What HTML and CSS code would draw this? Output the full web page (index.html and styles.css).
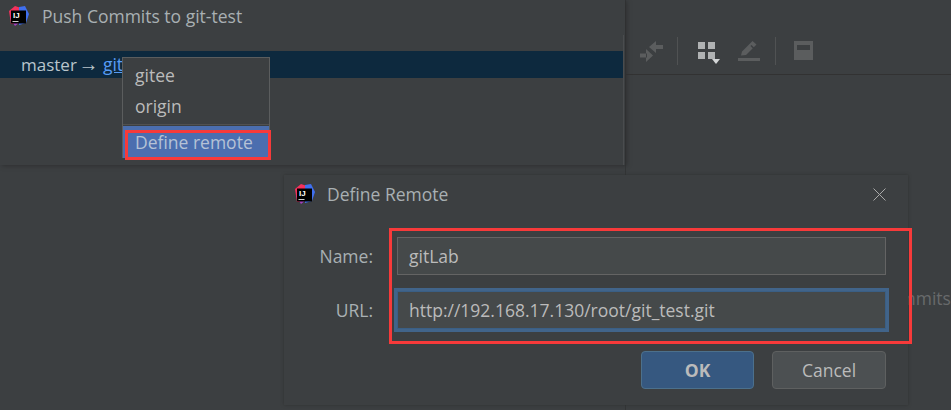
FILE: index.html
```html
<!DOCTYPE html>
<html lang="en">
<head>
  <meta charset="UTF-8">
  <title>Define Remote</title>
  <link rel="stylesheet" href="styles.css">
</head>
<body>

<!-- window behind, right side -->
<section class="log-window">
  <div class="log-toolbar">
    <svg class="tool" width="24" height="24" viewBox="0 0 24 24"><path d="M14 6h9v4h-9zM9 8l7-6v12z" fill="#5b5d5e"/><path d="M0 14.500h7v4H0zM13 16.500l-7-6.500v13z" fill="#5b5d5e"/></svg>
    <span class="tool-sep sep-first"></span>
    <span class="group-icon"><i></i><i></i><i></i><i></i><b></b></span>
    <svg class="tool" width="24" height="24" viewBox="0 0 24 24"><path d="M1 19h22v3H1zM4 16.500l1-4L15.500 2l4 3.500L9 16z" fill="#5b5d5e"/><path d="M14 6.500l3 3" stroke="#3c3f41" stroke-width="1.500"/></svg>
    <span class="tool-sep sep-second"></span>
    <span class="preview-icon"></span>
  </div>
  <p class="log-empty">Commits</p>
</section>

<!-- push dialog -->
<section class="push-window">
  <header class="title-bar">
    <svg class="app-icon" width="20" height="20" viewBox="0 0 20 20"><path d="M0 5l6-5 6 2-4 15-6 1z" fill="#f5315c"/><path d="M1 12l5 8 5-4z" fill="#a63fbf"/><path d="M10 1l6-1 4 8-3 9-7 2z" fill="#3f6fee"/><rect x="2" y="4.500" width="15" height="13" fill="#000"/><rect x="3.500" y="15" width="6" height="1" fill="#ccc"/><text x="4" y="12" class="app-icon-text">IJ</text></svg>
    <h1>Push Commits to git-test</h1>
  </header>
  <div class="branch-row">
    <span class="branch-name">master</span> <span class="arrow">→</span> <a class="remote-link">git</a>
  </div>
</section>

<div class="remote-menu">
  <div class="menu-item">gitee</div>
  <div class="menu-item">origin</div>
  <div class="menu-sep"></div>
  <div class="menu-item selected">Define remote</div>
</div>
<div class="mark mark-menu"></div>

<!-- define remote dialog -->
<section class="define-dialog">
  <header class="title-bar dialog-title">
    <svg class="app-icon" width="20" height="20" viewBox="0 0 20 20"><path d="M0 5l6-5 6 2-4 15-6 1z" fill="#f5315c"/><path d="M1 12l5 8 5-4z" fill="#a63fbf"/><path d="M10 1l6-1 4 8-3 9-7 2z" fill="#3f6fee"/><rect x="2" y="4.500" width="15" height="13" fill="#000"/><rect x="3.500" y="15" width="6" height="1" fill="#ccc"/><text x="4" y="12" class="app-icon-text">IJ</text></svg>
    <h2>Define Remote</h2>
    <svg class="close-icon" width="13" height="13" viewBox="0 0 13 13"><path d="M.5.500l12 12M12.500.500l-12 12" stroke="#a9a9a9" stroke-width="1" fill="none"/></svg>
  </header>
  <div class="form">
    <label class="form-label">Name:</label>
    <div class="field">gitLab</div>
    <label class="form-label">URL:</label>
    <div class="field focused">http://192.168.17.130/root/git_test.git</div>
  </div>
  <div class="buttons">
    <button class="btn btn-ok">OK</button>
    <button class="btn">Cancel</button>
  </div>
  <div class="mark mark-form"></div>
</section>

</body>
</html>
```

FILE: styles.css
```css
/* General Styles */
html, body {
  height: 100%;
}
body {
  position: relative;
  margin: 0;
  overflow: hidden;
  background-color: #3c3f41;
  color: #bbbbbb;
  font-family: "Open Sans", "Noto Sans", sans-serif;
  font-size: 17.5px;
}
h1, h2 {
  margin: 0;
  font-size: 17.5px;
  font-weight: 400;
  color: #a9b0b3;
}

/* Windows */
.push-window {
  position: absolute;
  left: 0;
  top: 0;
  width: 625px;
  height: 165px;
  background-color: #3c3f41;
  box-shadow: 2px 1px 4px #2f3031;
}
.push-window::after {
  content: "";
  position: absolute;
  right: 1px;
  top: 35px;
  bottom: 0;
  width: 1px;
  background-color: #4a4c4e;
}
.log-window {
  position: absolute;
  left: 625px;
  top: 0;
  right: 0;
  bottom: 0;
  background-color: #3c3f41;
  border-left: 1px solid #333536;
}
.log-toolbar {
  display: flex;
  align-items: center;
  height: 75px;
  padding: 27px 0 0 14px;
  box-sizing: border-box;
  border-bottom: 1px solid #323232;
}
.tool {
  flex: none;
}
.tool-sep {
  width: 1px;
  height: 28px;
  background-color: #505253;
}
.sep-first {
  margin: 0 20px 0 13px;
}
.sep-second {
  margin: 0 18px 0 14px;
}
.group-icon {
  display: grid;
  position: relative;
  grid-template-columns: 7px 7px;
  gap: 3px;
  margin-right: 22px;
}
.group-icon i {
  width: 7px;
  height: 7px;
  background-color: #b0b2b3;
}
.group-icon b {
  position: absolute;
  right: -5px;
  bottom: -5px;
  border-left: 4px solid transparent;
  border-right: 4px solid transparent;
  border-top: 5px solid #d4d6d7;
}
.preview-icon {
  width: 19px;
  height: 19px;
  box-sizing: border-box;
  background-color: #5b5d5e;
  border-top: 4px solid #5b5d5e;
}
.preview-icon::before {
  content: "";
  display: block;
  height: 5px;
  margin: 0 3px;
  background-color: #3c3f41;
}
.log-empty {
  position: absolute;
  left: 252px;
  top: 286px;
  margin: 0;
  line-height: 24px;
  color: #686a6b;
}

/* Title bars */
.title-bar {
  display: flex;
  align-items: center;
  height: 32px;
  padding-left: 9px;
  gap: 13px;
}
.app-icon {
  flex: none;
}
.app-icon-text {
  font-family: "Liberation Sans", sans-serif;
  font-size: 8px;
  font-weight: 700;
  fill: #fff;
}

/* Push window content */
.branch-row {
  margin-top: 19px;
  height: 27px;
  margin-right: 2px;
  padding-left: 21px;
  background-color: #0d293e;
  color: #b9c5cc;
  line-height: 27px;
}
.branch-name {
  font-size: 17px;
}
.arrow {
  margin: 0 0 0 -3px;
  font-family: "Liberation Sans", sans-serif;
  font-size: 20px;
  line-height: 1;
}
.remote-link {
  color: #589df6;
  text-decoration: underline;
}

/* Popup */
.remote-menu {
  position: absolute;
  left: 122px;
  top: 57px;
  width: 148px;
  height: 101px;
  padding-top: 2px;
  box-sizing: border-box;
  background-color: #3c3f41;
  border: 1px solid #5b5d5e;
}
.menu-item {
  height: 31px;
  padding-left: 12px;
  line-height: 30px;
  color: #bbbbbb;
}
.menu-sep {
  height: 1px;
  margin: 2px 0 1px;
  background-color: #515151;
}
.selected {
  height: 32px;
  line-height: 32px;
  background-color: #4b6eaf;
  color: #b5c2d6;
}

/* Red marks drawn over the screenshot */
.mark {
  position: absolute;
  box-sizing: border-box;
  border: 3px solid #f73a3a;
}
.mark-menu {
  left: 125px;
  top: 130px;
  width: 146px;
  height: 30px;
}
.mark-form {
  left: 105px;
  top: 53px;
  width: 523px;
  height: 116px;
}

/* Define remote dialog */
.define-dialog {
  position: absolute;
  left: 284px;
  top: 175px;
  width: 624px;
  height: 230px;
  background-color: #3c3f41;
  box-shadow: 0 0 3px #2f3031;
}
.dialog-title {
  height: 38px;
  padding-left: 11px;
  gap: 12px;
}
.close-icon {
  margin-left: auto;
  margin-right: 22px;
}
.form {
  display: grid;
  grid-template-columns: 89px 489px;
  grid-template-rows: 38px 38px;
  row-gap: 16px;
  column-gap: 24px;
  margin-top: 24px;
}
.form-label {
  justify-self: end;
  align-self: center;
  color: #a9b0b3;
}
.field {
  padding-left: 11px;
  box-sizing: border-box;
  background-color: #45494a;
  border: 1px solid #646464;
  line-height: 36px;
  color: #bbbbbb;
}
.focused {
  border-color: #3a5f85;
  box-shadow: 0 0 0 3px #41648a;
}
.buttons {
  display: flex;
  justify-content: flex-end;
  gap: 18px;
  margin-top: 22px;
  padding-right: 22px;
}
.btn {
  width: 114px;
  height: 38px;
  padding: 0;
  font: inherit;
  color: #bbbbbb;
  background-color: #4c5052;
  border: 1px solid #5e6060;
  border-radius: 4px;
}
.btn-ok {
  width: 113px;
  font-weight: 700;
  background-color: #365880;
  border-color: #4c708c;
}
```
